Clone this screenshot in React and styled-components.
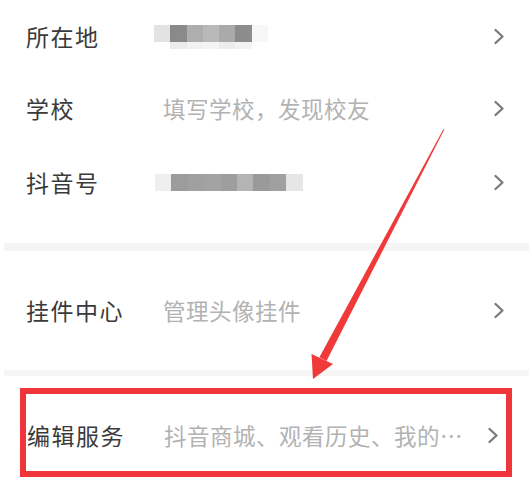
import React from "react";
import styled, { createGlobalStyle } from "styled-components";

const GlobalStyle = createGlobalStyle`
  html, body { margin: 0; padding: 0; background: #ffffff; }
  body { font-family: "Noto Sans CJK SC", "Noto Sans", sans-serif; }
`;

const Page = styled.div`
  position: relative;
  width: 529px;
  height: 489px;
  overflow: hidden;
  background: #ffffff;
`;

const Section = styled.div`
  display: flex;
  flex-direction: column;
  padding-top: ${(p) => p.$top || 0}px;
  padding-bottom: ${(p) => p.$bottom || 0}px;
`;

const Divider = styled.div`
  height: ${(p) => p.$h}px;
  margin-left: 4px;
  background: #f5f5f5;
`;

const Row = styled.div`
  display: grid;
  grid-template-columns: 137px 1fr auto;
  align-items: center;
  height: ${(p) => p.$h}px;
  padding: 0 24px 0 26px;
  box-sizing: border-box;
`;

const HighlightRow = styled.div`
  display: grid;
  grid-template-columns: 137px 1fr auto;
  align-items: center;
  height: 89px;
  margin: 12px 17px 0 20px;
  padding: 6px 7px 0 1px;
  border: 6px solid #f0363b;
  box-sizing: border-box;
`;

const Label = styled.span`
  font-size: 23px;
  line-height: 1.2;
  letter-spacing: 1.5px;
  color: #3a3a3a;
  white-space: nowrap;
`;

const Value = styled.span`
  font-size: 22.5px;
  line-height: 1.2;
  letter-spacing: 0.5px;
  color: #b2b2b2;
  white-space: nowrap;
`;

const Mosaic = styled.div`
  display: grid;
  grid-template-columns: repeat(${(p) => p.$cols}, ${(p) => p.$w}px);
  grid-auto-rows: ${(p) => p.$rh};
  margin-left: ${(p) => p.$offset}px;
  align-self: center;
  filter: blur(0.6px);
`;

const Pixel = styled.div`
  background: ${(p) => p.$c};
`;

const Chevron = () => (
  <svg width="12" height="17" viewBox="0 0 12 17">
    <path
      d="M2.5 2 L9.5 8.5 L2.5 15"
      fill="none"
      stroke="#7a7a7a"
      strokeWidth="2.3"
      strokeLinecap="round"
      strokeLinejoin="round"
    />
  </svg>
);

const ArrowLayer = styled.svg`
  position: absolute;
  left: 0;
  top: 0;
  pointer-events: none;
`;

const mosaic1 = [
  "#e3e3e3", "#8a8a8a", "#aeaeae", "#b9b9b9", "#aaaaaa", "#8c8c8c", "#f7f7f7",
  "#ffffff", "#ececec", "#f2f2f2", "#f4f4f4", "#ededed", "#f3f3f3", "#ffffff",
];
const mosaic3 = [
  "#efefef", "#9c9c9c", "#a0a0a0", "#a3a3a3", "#9e9e9e", "#b4b4b4", "#9a9a9a", "#a0a0a0", "#e6e6e6",
];

export default function App() {
  return (
    <Page>
      <GlobalStyle />
      <Section $top={1} $bottom={23}>
        <Row $h={71}>
          <Label>所在地</Label>
          <Mosaic $cols={7} $w={16.3} $rh="17px 7px" $offset={-9}>
            {mosaic1.map((c, i) => (
              <Pixel key={i} $c={c} />
            ))}
          </Mosaic>
          <Chevron />
        </Row>
        <Row $h={73}>
          <Label>学校</Label>
          <Value>填写学校，发现校友</Value>
          <Chevron />
        </Row>
        <Row $h={75}>
          <Label>抖音号</Label>
          <Mosaic $cols={9} $w={16.4} $rh="17px" $offset={-8}>
            {mosaic3.map((c, i) => (
              <Pixel key={i} $c={c} />
            ))}
          </Mosaic>
          <Chevron />
        </Row>
      </Section>
      <Divider $h={8} />
      <Section>
        <Row $h={119}>
          <Label>挂件中心</Label>
          <Value>管理头像挂件</Value>
          <Chevron />
        </Row>
      </Section>
      <Divider $h={6} />
      <HighlightRow>
        <Label>编辑服务</Label>
        <Value>抖音商城、观看历史、我的…</Value>
        <Chevron />
      </HighlightRow>
      <ArrowLayer width="529" height="489" viewBox="0 0 529 489">
        <polygon
          points="443.5,129 444.3,129.6 326.5,361 319.4,357.2"
          fill="#f03a3a"
        />
        <polygon points="313,379 311.5,354 333,364" fill="#f03a3a" />
      </ArrowLayer>
    </Page>
  );
}
